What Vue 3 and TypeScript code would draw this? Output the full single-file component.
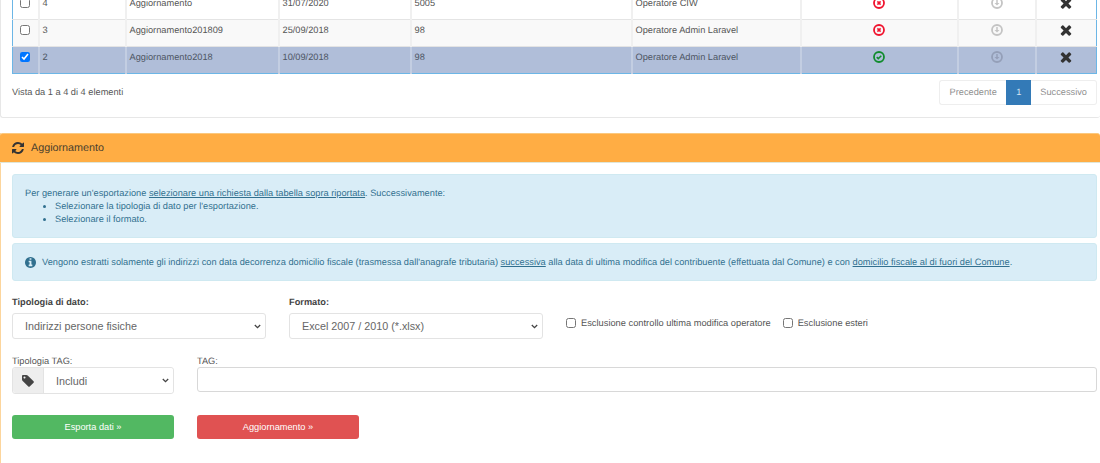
<script setup lang="ts">
interface Row { id: number; name: string; date: string; count: string; op: string; ok: boolean; checked: boolean }
const rows: Row[] = [
  { id: 4, name: 'Aggiornamento', date: '31/07/2020', count: '5005', op: 'Operatore CIW', ok: false, checked: false },
  { id: 3, name: 'Aggiornamento201809', date: '25/09/2018', count: '98', op: 'Operatore Admin Laravel', ok: false, checked: false },
  { id: 2, name: 'Aggiornamento2018', date: '10/09/2018', count: '98', op: 'Operatore Admin Laravel', ok: true, checked: true },
]
const times = 'M1490 1322q0 40-28 68l-136 136q-28 28-68 28t-68-28l-294-294-294 294q-28 28-68 28t-68-28l-136-136q-28-28-28-68t28-68l294-294-294-294q-28-28-28-68t28-68l136-136q28-28 68-28t68 28l294 294 294-294q28-28 68-28t68 28l136 136q28 28 28 68t-28 68l-294 294 294 294q28 28 28 68z'
const refresh = 'M1639 1056q0 5-1 7-64 268-268 434.500t-478 166.500q-146 0-282.500-55t-243.500-157l-129 129q-19 19-45 19t-45-19-19-45v-448q0-26 19-45t45-19h448q26 0 45 19t19 45-19 45l-137 137q71 66 161 102t187 36q134 0 250-65t186-179q11-17 53-117 8-23 30-23h192q13 0 22.500 9.500t9.500 22.500zm25-800v448q0 26-19 45t-45 19h-448q-26 0-45-19t-19-45 19-45l138-138q-148-137-349-137-134 0-250 65t-186 179q-11 17-53 117-8 23-30 23h-199q-13 0-22.500-9.500t-9.500-22.500v-7q65-268 270-434.500t480-166.500q146 0 284 55.500t245 156.500l130-129q19-19 45-19t45 19 19 45z'
const tag = 'M576 448q0-53-37.500-90.500t-90.500-37.500-90.500 37.500-37.500 90.500 37.500 90.500 90.500 37.500 90.500-37.500 37.500-90.500zm1067 576q0 53-37 90l-491 492q-39 37-91 37-53 0-90-37l-715-716q-38-37-64.500-101t-26.500-117v-416q0-52 38-90t90-38h416q53 0 117 26.500t102 64.500l715 714q37 39 37 91z'
const info = 'M1152 1376v-160q0-14-9-23t-23-9h-96v-512q0-14-9-23t-23-9h-320q-14 0-23 9t-9 23v160q0 14 9 23t23 9h96v320h-96q-14 0-23 9t-9 23v160q0 14 9 23t23 9h448q14 0 23-9t9-23zm-128-896v-160q0-14-9-23t-23-9h-192q-14 0-23 9t-9 23v160q0 14 9 23t23 9h192q14 0 23-9t9-23zm640 416q0 209-103 385.500t-279.500 279.500-385.500 103-385.500-103-279.500-279.500-103-385.500 103-385.500 279.500-279.500 385.500-103 385.500 103 279.500 279.500 103 385.500z'
</script>

<template>
  <div class="page">
    <section class="card top">
      <table class="grid">
        <colgroup>
          <col style="width:26px" /><col style="width:87px" /><col style="width:153px" /><col style="width:132px" />
          <col style="width:221px" /><col style="width:169px" /><col style="width:157px" /><col style="width:78px" /><col />
        </colgroup>
        <tbody>
          <tr v-for="(r, i) in rows" :key="r.id" :class="{ odd: i % 2 === 1, sel: r.checked }">
            <td class="c"><input type="checkbox" :checked="r.checked" /></td>
            <td>{{ r.id }}</td>
            <td>{{ r.name }}</td>
            <td>{{ r.date }}</td>
            <td>{{ r.count }}</td>
            <td>{{ r.op }}</td>
            <td class="c">
              <svg class="ic12 stroke" :class="r.ok ? 'green' : 'red'" viewBox="0 0 12 12">
                <circle cx="6" cy="6" r="5" stroke-width="1.8" />
                <path v-if="r.ok" d="M3.700 6.100L5.300 7.600L8.300 4.700" stroke-width="1.500" />
                <path v-else d="M4.400 4.400L7.600 7.600M7.600 4.400L4.400 7.600" stroke-width="1.500" />
              </svg>
            </td>
            <td class="c">
              <svg class="ic12 stroke grey" viewBox="0 0 12 12">
                <circle cx="6" cy="6" r="5" stroke-width="1.8" />
                <path d="M6 3v3.500" stroke-width="1.500" />
                <path class="solid" d="M3.500 5.900h5L6 8.600z" />
              </svg>
            </td>
            <td class="c">
              <svg class="ic12 dark" viewBox="220 220 1352 1352"><path :d="times" /></svg>
            </td>
          </tr>
        </tbody>
      </table>
      <div class="foot">
        <span class="info">Vista da 1 a 4 di 4 elementi</span>
        <div class="pager">
          <span class="pg first">Precedente</span>
          <span class="pg on">1</span>
          <span class="pg last">Successivo</span>
        </div>
      </div>
    </section>

    <section class="card panel">
      <header class="head">
        <svg class="ic12 dark" viewBox="128 128 1536 1536"><path :d="refresh" /></svg>
        <span>Aggiornamento</span>
      </header>
      <div class="body">
        <div class="alert a1">
          <div>Per generare un'esportazione <u>selezionare una richiesta dalla tabella sopra riportata</u>. Successivamente:</div>
          <ul>
            <li>Selezionare la tipologia di dato per l'esportazione.</li>
            <li>Selezionare il formato.</li>
          </ul>
        </div>
        <div class="alert a2">
          <svg class="ic11" viewBox="128 128 1536 1536"><path :d="info" /></svg>
          <span>Vengono estratti solamente gli indirizzi con data decorrenza domicilio fiscale (trasmessa dall'anagrafe tributaria) <u>successiva</u> alla data di ultima modifica del contribuente (effettuata dal Comune) e con <u>domicilio fiscale al di fuori del Comune</u>.</span>
        </div>

        <div class="row r1">
          <div class="field">
            <label class="b">Tipologia di dato:</label>
            <select class="ctl"><option>Indirizzi persone fisiche</option></select>
          </div>
          <div class="field">
            <label class="b">Formato:</label>
            <select class="ctl"><option>Excel 2007 / 2010 (*.xlsx)</option></select>
          </div>
          <div class="checks">
            <label class="chk"><input type="checkbox" />Esclusione controllo ultima modifica operatore</label>
            <label class="chk"><input type="checkbox" />Esclusione esteri</label>
          </div>
        </div>

        <div class="row r2">
          <div class="field narrow">
            <label>Tipologia TAG:</label>
            <div class="group">
              <span class="addon"><svg class="ic12 tagc" viewBox="128 128 1536 1536"><path :d="tag" /></svg></span>
              <select class="ctl in"><option>Includi</option></select>
            </div>
          </div>
          <div class="field grow">
            <label>TAG:</label>
            <input class="text" type="text" />
          </div>
        </div>

        <div class="row r3">
          <button class="btn green-b">Esporta dati »</button>
          <button class="btn red-b">Aggiornamento »</button>
        </div>
      </div>
    </section>
  </div>
</template>

<style>
html, body { margin: 0; background: #fff; overflow: hidden; }
</style>

<style scoped>
.page { height: 463px; overflow: hidden; font-family: "Liberation Sans", Arial, sans-serif; font-size: 9.24px; color: #555; background: #fff; text-rendering: geometricPrecision; }
.card { box-sizing: border-box; background: #fff; }
.top { margin-top: -8px; height: 126px; padding: 0 3px 0 11px; border: 1px solid #e7e7e7; border-top: 0; border-radius: 0 0 3px 3px; border-right: 0; }
.grid { width: 1085px; border-collapse: collapse; table-layout: fixed; border: 1px solid #6cb6e6; }
.grid td { height: 27px; box-sizing: border-box; padding: 4px 3px 0; vertical-align: top; line-height: 12px; border-left: 2px solid #f0f0f0; border-top: 1px solid #e4e4e4; color: #555; }
.grid tr:first-child td { border-top: 0; }
.grid td:first-child { border-left: 0; }
.grid tr.odd td { background: #f9f9f9; }
.grid tr.sel td { background: #b0bed9; border-left-color: #c3cee2; color: #4d5563; }
.c { text-align: center; }
.grid input { margin: 1px 0 0; width: 10px; height: 10px; vertical-align: top; }
svg { display: inline-block; vertical-align: top; fill: currentColor; flex: none; }
.stroke { fill: none; stroke: currentColor; }
.stroke .solid { fill: currentColor; stroke: none; }
.ic12 { width: 12px; height: 12px; }
.ic11 { width: 11px; height: 11px; }
.red { color: #f0142f; }
.green { color: #118c2e; }
.grey { color: #c4c4c4; }
.sel .grey { color: #949fb8; }
.dark { color: #333; }
.foot { display: flex; justify-content: space-between; align-items: center; margin-top: 6px; }
.info { position: relative; top: -1px; }
.pager { display: flex; }
.pg { box-sizing: border-box; height: 25px; line-height: 23px; border: 1px solid #eee; padding: 0 9.5px; color: #8f8f8f; background: #fff; }
.first { border-radius: 3px 0 0 3px; border-right: 0; }
.last { border-radius: 0 3px 3px 0; border-left: 0; padding: 0 9px; }
.on { background: #337ab7; border-color: #337ab7; color: #d8e6f2; width: 25px; padding: 0; text-align: center; }
.panel { margin-top: 15px; border-left: 1px solid #fcd59c; }
.head { height: 30px; background: #ffad44; border-top: 1px solid #fbc87e; border-bottom: 1px solid #dfe6d8; margin-left: -1px; box-sizing: border-box; display: flex; align-items: center; gap: 7px; padding-left: 12px; font-size: 10.78px; color: #4b3f2d; border-radius: 3px 3px 0 0; }
.body { padding: 11px 3px 30px 11px; }
.alert { box-sizing: border-box; background: #d9edf7; border: 1px solid #cfe9f1; border-radius: 3px; color: #31708f; font-size: 9.24px; }
.a1 { height: 64px; padding: 12px 12px 0; line-height: 13px; }
.a1 ul { margin: 0; padding-left: 30px; }
.a2 { height: 38px; margin-top: 5px; display: flex; align-items: center; gap: 6px; padding: 0 12px; }
.row { display: flex; gap: 23px; }
.r1 { margin-top: 15px; align-items: flex-start; }
.field { display: flex; flex-direction: column; width: 254px; }
.field label { font-size: 9.24px; line-height: 11px; color: #555; }
.field label.b { font-weight: 700; color: #444; line-height: 12px; margin-bottom: 5px; }
.ctl { box-sizing: border-box; height: 26px; width: 100%; border: 1px solid #e3e3e3; border-radius: 3px; color: #666; font: 10.78px "Liberation Sans", Arial, sans-serif; padding: 0 12px; appearance: none; background: #fff url("data:image/svg+xml,%3Csvg xmlns='http://www.w3.org/2000/svg' width='7' height='5'%3E%3Cpath d='M.8 1l2.7 2.7L6.200 1' fill='none' stroke='%23444' stroke-width='1.300'/%3E%3C/svg%3E") no-repeat right 4px center; }
.checks { display: flex; gap: 12px; margin-top: 21px; }
.chk { display: flex; align-items: center; gap: 5px; font-size: 9.3px; color: #555; white-space: nowrap; }
.chk input { margin: 1px 0 0; width: 10px; height: 10px; }
.r2 { margin-top: 17px; }
.narrow { width: 162px; }
.grow { flex: 1; width: auto; }
.group { display: flex; border: 1px solid #e3e3e3; border-radius: 3px; height: 27px; box-sizing: border-box; }
.addon { width: 30px; background: #eee; border-right: 1px solid #e3e3e3; display: flex; align-items: center; justify-content: center; border-radius: 3px 0 0 3px; }
.tagc { color: #444; }
.in { border: 0; height: 25px; padding-left: 12px; flex: 1; }
.text { box-sizing: border-box; height: 25px; border: 1px solid #d8d8d8; border-radius: 3px; background: #fff; }
.r3 { margin-top: 21px; }
.btn { box-sizing: border-box; width: 162px; height: 24px; border: 1px solid transparent; border-radius: 3px; color: #fff; font: 9.24px "Liberation Sans", Arial, sans-serif; }
.green-b { background: #52b862; }
.red-b { background: #e05252; }
</style>
